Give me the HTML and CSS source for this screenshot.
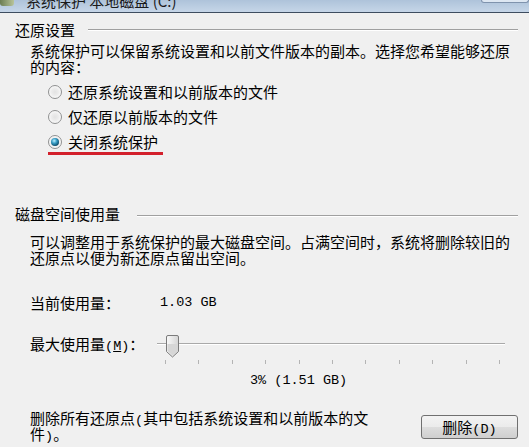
FILE: index.html
```html
<!DOCTYPE html>
<html lang="zh-CN">
<head>
    <meta charset="UTF-8">
    <title>系统保护</title>
    <link rel="stylesheet" href="styles.css">
</head>
<body>
    <div class="titlebar">
        <span class="title-icon"></span>
        <span class="title-text">系统保护 本地磁盘 (C:)</span>
        <span class="title-btn"></span>
    </div>

    <div class="dialog">
        <div class="group-head"><span>还原设置</span><span class="rule"></span></div>
        <p class="desc">系统保护可以保留系统设置和以前文件版本的副本。选择您希望能够还原的内容：</p>
        <ul class="options">
            <li><span class="radio"></span>还原系统设置和以前版本的文件</li>
            <li><span class="radio"></span>仅还原以前版本的文件</li>
            <li class="marked"><span class="radio on"></span>关闭系统保护</li>
        </ul>

        <div class="group-head disk"><span>磁盘空间使用量</span><span class="rule"></span></div>
        <p class="desc">可以调整用于系统保护的最大磁盘空间。占满空间时，系统将删除较旧的还原点以便为新还原点留出空间。</p>

        <div class="usage">
            <span class="usage-label">当前使用量：</span>
            <span class="num">1.03 GB</span>
        </div>

        <div class="max-row">
            <span class="usage-label">最大使用量<span class="num">(<u>M</u>)</span>：</span>
            <div class="slider">
                <div class="track"></div>
                <svg class="thumb" width="13" height="23" viewBox="0 0 13 23">
                    <defs>
                        <linearGradient id="tg" x1="0" y1="0" x2="1" y2="0">
                            <stop offset="0" stop-color="#fafafa"/>
                            <stop offset="1" stop-color="#d4d4d4"/>
                        </linearGradient>
                    </defs>
                    <path d="M0.5 2 Q0.5 0.5 2 0.5 H11 Q12.5 0.5 12.5 2 V16.5 L6.5 22 L0.5 16.5 Z" fill="url(#tg)" stroke="#7b7b7b"/>
                    <path d="M1.5 9 H11.5 V16 L6.5 20.5 L1.5 16 Z" fill="#d6d6d6"/>
                </svg>
                <div class="ticks">
                    <i></i><i></i><i></i><i></i><i></i><i></i><i></i><i></i><i></i><i></i><i></i>
                </div>
            </div>
        </div>

        <div class="percent num">3% (1.51 GB)</div>

        <div class="delete-row">
            <p class="delete-text">删除所有还原点<span class="num">(</span>其中包括系统设置和以前版本的文件<span class="num">)</span>。</p>
            <button type="button" class="btn">删除<span class="num">(D)</span></button>
        </div>
    </div>
</body>
</html>
```

FILE: styles.css
```css
body {
    margin: 0;
    width: 529px;
    height: 447px;
    overflow: hidden;
    background-color: #f0f0f0;
    font-family: "Noto Sans CJK SC", sans-serif;
    font-size: 15px;
    line-height: 16px;
    color: #000;
}

.titlebar {
    height: 12px;
    display: flex;
    overflow: hidden;
    background: linear-gradient(to bottom, #aec3da, #c6d6e8);
    border-bottom: 1px solid #3e4d60;
}

.title-icon {
    width: 14px;
    height: 6px;
    background: linear-gradient(to right, #6b7d52, #b8c49a);
    border-radius: 0 0 3px 3px;
}

.title-text {
    margin-left: 12px;
    margin-top: -8px;
    font-size: 15px;
    line-height: 18px;
    color: #1a1a1a;
}

.title-btn {
    margin-left: auto;
    width: 46px;
    height: 2px;
    border: 1px solid #7f93ad;
    border-top: none;
    border-radius: 0 0 3px 3px;
    background: #dde7f2;
}

.dialog {
    padding: 0 11px 0 15px;
}

.group-head {
    display: flex;
    align-items: center;
    margin-top: 9px;
}

.group-head.disk {
    margin-top: 52px;
}

.rule {
    flex: 1;
    height: 0;
    margin-left: 13px;
    margin-top: -1px;
    border-top: 1px solid #a0a0a0;
    border-bottom: 1px solid #fff;
}

.group-head.disk .rule {
    margin-left: 17px;
    margin-top: 4px;
}

.desc {
    margin: 5px 0 0 15px;
    width: 480px;
}

.group-head.disk + .desc {
    margin-top: 12px;
}

.options {
    list-style: none;
    margin: 4px 0 0 33px;
    padding: 0;
}

.options li {
    height: 25px;
    display: flex;
    align-items: center;
    width: fit-content;
}

.options li.marked {
    position: relative;
}

.options li.marked::after {
    content: "";
    position: absolute;
    left: 0;
    right: -5px;
    bottom: -1px;
    height: 3px;
    background-color: #d3202c;
}

.radio {
    width: 14px;
    height: 14px;
    margin-right: 6px;
    box-sizing: border-box;
    border: 1px solid #8f9091;
    border-radius: 50%;
    background: radial-gradient(circle at 50% 50%, #e2e2e2 0, #ececec 40%, #fafafa 75%);
    display: flex;
    align-items: center;
    justify-content: center;
}

.radio.on::before {
    content: "";
    width: 8px;
    height: 8px;
    border-radius: 50%;
    background: radial-gradient(circle at 40% 35%, #bdf0ff 0, #3a9fc7 35%, #0c4a68 75%, #06283a 100%);
}

.num {
    font-family: "Liberation Mono", monospace;
    font-size: 13.5px;
}

.usage-label .num,
.delete-text .num,
.btn .num {
    line-height: 0;
}

.usage {
    display: flex;
    margin: 29px 0 0 15px;
}

.usage-label {
    width: 130px;
    flex-shrink: 0;
    white-space: nowrap;
}

.max-row {
    display: flex;
    margin: 25px 0 0 15px;
    height: 32px;
}

.max-row .usage-label {
    width: 127px;
}

.slider {
    position: relative;
    width: 348px;
}

.track {
    margin-top: 7px;
    height: 0;
    border-top: 1px solid #a9a9a9;
    border-bottom: 1px solid #fff;
}

.thumb {
    position: absolute;
    left: 9px;
    top: -1px;
}

.ticks {
    display: flex;
    justify-content: space-between;
    margin: 15px 5px 0 8px;
}

.ticks i {
    width: 1px;
    height: 4px;
    background-color: #b4b4b4;
}

.percent {
    margin: 5px 0 0 235px;
    line-height: 16px;
}

.delete-row {
    display: flex;
    align-items: flex-start;
    margin: 21px 0 0 15px;
}

.delete-text {
    margin: 0;
    width: 376px;
}

.btn {
    margin: 5px 0 0 auto;
    width: 97px;
    height: 24px;
    padding: 0;
    border: 1px solid #707070;
    border-radius: 3px;
    background: linear-gradient(to bottom, #f3f3f3 0, #ebebeb 50%, #dddddd 51%, #cfcfcf 100%);
    font-family: "Noto Sans CJK SC", sans-serif;
    font-size: 15px;
    line-height: 16px;
    color: #000;
}
```
